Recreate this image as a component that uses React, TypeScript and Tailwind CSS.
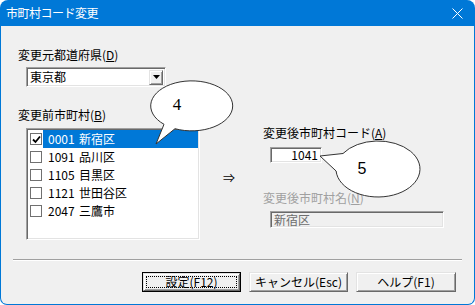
import React from "react"

const ROWS = [
  { code: "0001", name: "新宿区", checked: true, selected: true },
  { code: "1091", name: "品川区", checked: false, selected: false },
  { code: "1105", name: "目黒区", checked: false, selected: false },
  { code: "1121", name: "世田谷区", checked: false, selected: false },
  { code: "2047", name: "三鷹市", checked: false, selected: false },
]

const sunken =
  "border border-[#a0a0a0] border-b-white border-r-white shadow-[inset_1px_1px_0_#696969,inset_-1px_-1px_0_#e3e3e3]"
const raised =
  "border border-[#e3e3e3] border-b-[#696969] border-r-[#696969] shadow-[inset_1px_1px_0_#ffffff,inset_-1px_-1px_0_#a0a0a0]"

function CheckBox({ checked }: { checked: boolean }) {
  return (
    <div className="w-[12px] h-[12px] border border-[#707070] bg-white flex items-center justify-center shrink-0">
      {checked && (
        <svg width="9" height="9" viewBox="0 0 9 9">
          <path d="M1 4.5 L3.5 7 L8 1.5" stroke="#000" strokeWidth="1.8" fill="none" />
        </svg>
      )}
    </div>
  )
}

export default function App() {
  return (
    <div className="relative w-[475px] h-[305px] bg-[#0078d7] rounded-t-[8px] rounded-b-[7px] flex flex-col overflow-hidden font-['Noto_Sans_CJK_JP','Liberation_Sans',sans-serif]">
      {/* title bar */}
      <div className="h-[26px] shrink-0 flex items-center justify-between pl-[6px] pr-[12px] text-white">
        <span className="text-[12px] leading-[14px] tracking-[-0.5px]">市町村コード変更</span>
        <svg width="11" height="11" viewBox="0 0 11 11">
          <path d="M0.5 0.5 L10.5 10.5 M10.5 0.5 L0.5 10.5" stroke="#fff" strokeWidth="1" />
        </svg>
      </div>

      <div className="flex-1 mx-[1px] mb-[1px] bg-[#f0f0f0] rounded-b-[6px] flex flex-col text-[12px] leading-[14px] text-black">
        <div className="h-[233px] shrink-0 flex pl-[17px]">
          {/* left column */}
          <div className="flex flex-col w-[183px]">
            <div className="mt-[22px]">
              変更元都道府県(<u>D</u>)
            </div>
            <div className={`mt-[5px] ml-[8px] w-[140px] h-[20px] bg-white flex items-center justify-between pl-[3px] pr-[2px] ${sunken}`}>
              <span>東京都</span>
              <div className={`w-[14px] h-[15px] bg-[#f0f0f0] flex items-center justify-center ${raised}`}>
                <svg width="7" height="4" viewBox="0 0 7 4">
                  <path d="M0 0 H7 L3.5 4 Z" fill="#000" />
                </svg>
              </div>
            </div>
            <div className="mt-[21px]">
              変更前市町村(<u>B</u>)
            </div>
            <div className={`mt-[6px] ml-[8px] w-[174px] h-[112px] bg-white flex flex-col pt-[1px] pl-[2px] pr-[1px] ${sunken}`}>
              {ROWS.map((r) => (
                <div key={r.code} className="h-[18px] flex items-center">
                  <div className="w-[14px] pl-[1px] flex items-center">
                    <CheckBox checked={r.checked} />
                  </div>
                  <div
                    className={`flex-1 h-full flex items-center pl-[5px] ${
                      r.selected ? "bg-[#0078d7] text-white" : ""
                    }`}
                  >
                    <span className="w-[31px]">{r.code}</span>
                    <span>{r.name}</span>
                  </div>
                </div>
              ))}
            </div>
          </div>

          {/* arrow */}
          <div className="w-[62px] pl-[22px] pt-[145px]">⇒</div>

          {/* right column */}
          <div className="flex flex-col pt-[100px]">
            <div>
              変更後市町村コード(<u>A</u>)
            </div>
            <div className={`mt-[7px] ml-[7px] w-[52px] h-[16px] bg-white flex items-center justify-end pr-[3px] ${sunken}`}>
              1041
            </div>
            <div className="mt-[28px] text-[#a0a0a0]">
              変更後市町村名(<u>N</u>)
            </div>
            <div className={`mt-[6px] ml-[7px] w-[174px] h-[17px] bg-[#f0f0f0] flex items-center pl-[3px] text-[#6d6d6d] ${sunken}`}>
              新宿区
            </div>
          </div>
        </div>

        {/* separator */}
        <div className="mx-[12px] border-t border-[#a0a0a0] border-b border-b-white" />

        {/* buttons */}
        <div className="mt-[11px] flex justify-end gap-[8px] pr-[18px]">
          <div className="w-[99px] h-[20px] border border-black">
            <div className={`w-full h-full bg-[#f0f0f0] flex items-center justify-center p-[2px] ${raised}`}>
              <div className="w-full h-full border border-dotted border-black flex items-center justify-center">
                設定(F12)
              </div>
            </div>
          </div>
          <div className={`w-[99px] h-[20px] bg-[#f0f0f0] flex items-center justify-center ${raised}`}>
            キャンセル(Esc)
          </div>
          <div className={`w-[100px] h-[20px] bg-[#f0f0f0] flex items-center justify-center ${raised}`}>
            ヘルプ(F1)
          </div>
        </div>
      </div>

      {/* callouts */}
      <svg className="absolute inset-0 pointer-events-none" width="475" height="305" viewBox="0 0 475 305">
        <path
          d="M175 128.7 L156 144 L164 124.3 A41 25 0 1 1 175 128.7 Z"
          fill="#fff"
          stroke="#333"
          strokeWidth="1"
        />
        <text x="177" y="110" textAnchor="middle" fontSize="17" fontFamily="Liberation Serif, serif" fill="#000">
          4
        </text>
        <path
          d="M336.1 171 L320 156 L343 153.5 A42 28 0 1 1 336.1 171 Z"
          fill="#fff"
          stroke="#333"
          strokeWidth="1"
        />
        <text x="362" y="174" textAnchor="middle" fontSize="16" fontFamily="Liberation Sans, sans-serif" fill="#000">
          5
        </text>
      </svg>
    </div>
  )
}
